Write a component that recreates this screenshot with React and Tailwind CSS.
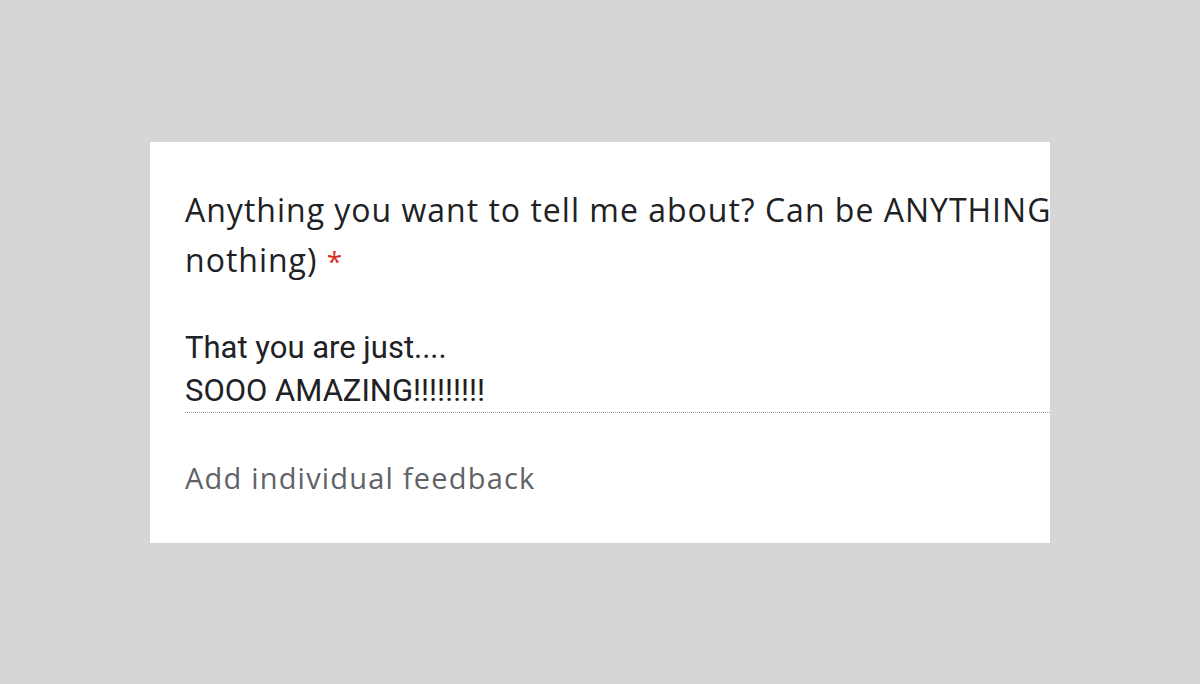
export default function App() {
  return (
    <div className="flex h-[684px] w-[1200px] items-center justify-center bg-[#d6d6d6]">
      <div className="h-[401px] w-[900px] overflow-hidden bg-white pl-[35px] pt-[43px]">
        {/* Question title */}
        <div
          className="whitespace-nowrap text-[32px] leading-[50px] tracking-[1px] text-[#202124]"
          style={{ fontFamily: '"Open Sans", sans-serif' }}
        >
          <div>Anything you want to tell me about? Can be ANYTHING</div>
          <div>
            nothing) <span className="text-[28px] text-[#d93025]">*</span>
          </div>
        </div>

        {/* Answer */}
        <div
          className="mt-[40px] border-b border-dotted border-[#9a9a9a] text-[31px] leading-[43px] text-[#202124]"
          style={{ fontFamily: 'Roboto, sans-serif' }}
        >
          <div>That you are just....</div>
          <div>SOOO AMAZING!!!!!!!!!</div>
        </div>

        {/* Feedback link */}
        <div
          className="mt-[45px] text-[29px] leading-[40px] font-medium tracking-[1.2px] text-[#5f6368]"
          style={{ fontFamily: '"Open Sans", sans-serif' }}
        >
          Add individual feedback
        </div>
      </div>
    </div>
  );
}
